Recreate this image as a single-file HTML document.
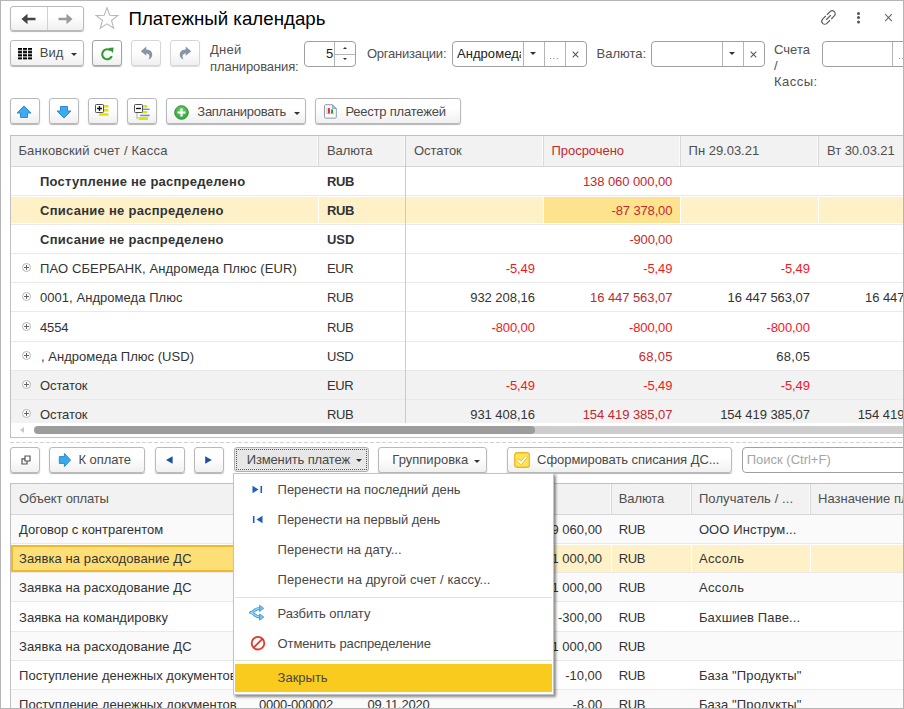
<!DOCTYPE html><html lang="ru"><head><meta charset="utf-8"><title>Платежный календарь</title><style>
*{box-sizing:border-box;margin:0;padding:0}
html,body{width:904px;height:709px;overflow:hidden;background:#fff}
body{position:relative;font-family:"Liberation Sans",sans-serif;font-size:13px;color:#333;line-height:16px}
.abs,.t,.btn svg,.btn i,.fld i,.fld svg{position:absolute}
.frame{position:absolute;left:0;top:0;width:904px;height:709px;border:1px solid #b5b5b5;z-index:50}
.btn{position:absolute;height:26px;border:1px solid #b9b9b9;border-radius:3px;background:linear-gradient(#fff,#fff 40%,#f0f0f0);box-shadow:0 1px 1px rgba(0,0,0,.3)}
.fld{position:absolute;height:26px;border:1px solid #a0a0a0;border-radius:4px;background:#fff;overflow:hidden}
.fld i{top:0;width:1px;height:24px;background:#b5b5b5}
.t{white-space:nowrap}
.caret{position:absolute;width:0;height:0;border-left:3px solid transparent;border-right:3px solid transparent;border-top:3px solid #333}
.vl{position:absolute;width:1px}
.hl{position:absolute;height:1px;background:#e9e9e9}
.b{font-weight:bold}
</style></head><body>
<div class="btn" style="left:10px;top:6px;width:74px;height:25px"><i style="left:36px;top:0;width:1px;height:23px;background:#d0d0d0"></i><svg style="left:10.3px;top:6px" width="16" height="12" viewBox="0 0 16 12"><path d="M0.5 6 L6.5 0.8 V4.7 H14.5 V7.3 H6.5 V11.2 Z" fill="#444"/></svg><svg style="left:46.2px;top:6px" width="16" height="12" viewBox="0 0 16 12"><path d="M15.5 6 L9.5 0.8 V4.7 H1.5 V7.3 H9.5 V11.2 Z" fill="#9b9b9b"/></svg></div>
<svg class="abs" style="left:94px;top:6px" width="26" height="24" viewBox="0 0 26 24"><path d="M13 1.8 L15.8 9.3 L23.8 9.6 L17.5 14.5 L19.7 22.2 L13 17.8 L6.3 22.2 L8.5 14.5 L2.2 9.6 L10.2 9.3 Z" fill="none" stroke="#b8b8b8" stroke-width="1.1" stroke-linejoin="miter"/></svg>
<div class="t" style="left:128.5px;top:7px;letter-spacing:0.03px;color:#000;font-size:18.67px;line-height:24px;">Платежный календарь</div>
<svg class="abs" style="left:818px;top:7px" width="21" height="21" viewBox="-10.5 -10.5 21 21"><g transform="rotate(-45) scale(1.07)" fill="none" stroke="#5e5e5e" stroke-width="1.1" stroke-linecap="round"><path d="M-1.2 -2.8 H-4.9 a2.8 2.8 0 0 0 0 5.6 H-1.2"/><path d="M1.2 -2.8 H4.9 a2.8 2.8 0 0 1 0 5.6 H1.2"/><path d="M-2.6 0 H2.6"/></g></svg>
<div class="abs" style="left:857px;top:12px;width:3px;height:3px;background:#555;border-radius:1.5px;box-shadow:0 4px 0 #555,0 8.5px 0 #555"></div>
<svg class="abs" style="left:884px;top:13px" width="9" height="9" viewBox="0 0 9 9"><path d="M1.2 1.2 L7.8 8.2 M7.8 1.2 L1.2 8.2" stroke="#666" stroke-width="1.1"/></svg>
<div class="btn" style="left:10px;top:40px;width:74px"><svg style="left:7px;top:7px" width="14" height="12" viewBox="0 0 14 12"><g fill="#a8a8a8"><rect x="0" y="0.2" width="4" height="11"/><rect x="5" y="0.2" width="4" height="11"/><rect x="10" y="0.2" width="4" height="11"/></g><g fill="#000"><rect x="0" y="0" width="4" height="1.7"/><rect x="5" y="0" width="4" height="1.7"/><rect x="10" y="0" width="4" height="1.7"/><rect x="0" y="3.2" width="4" height="1.7"/><rect x="5" y="3.2" width="4" height="1.7"/><rect x="10" y="3.2" width="4" height="1.7"/><rect x="0" y="6.4" width="4" height="1.7"/><rect x="5" y="6.4" width="4" height="1.7"/><rect x="10" y="6.4" width="4" height="1.7"/><rect x="0" y="9.6" width="4" height="1.7"/><rect x="5" y="9.6" width="4" height="1.7"/><rect x="10" y="9.6" width="4" height="1.7"/></g></svg><i class="caret" style="left:60px;top:12px"></i></div>
<div class="t" style="left:39.7px;top:45px;letter-spacing:0.03px;color:#494949;">Вид</div>
<div class="btn" style="left:92px;top:40px;width:30px;border-color:#a2a2a2"><svg style="left:7px;top:4.6px" width="15" height="16" viewBox="0 0 15 16"><path d="M11.8 10.2 A5 5 0 1 1 10.6 4.6" fill="none" stroke="#2e9d2e" stroke-width="2.1"/><path d="M8.2 2 L13.6 1.6 L13 7 Z" fill="#2e9d2e"/></svg></div>
<div class="btn" style="left:131px;top:40px;width:30px;border-color:#d6d6d6;box-shadow:0 1px 1px rgba(0,0,0,.15)"><svg style="left:8px;top:5px" width="14" height="14" viewBox="0 0 14 14"><path d="M0.8 5.2 L6.3 0.6 V3.5 C10.8 3.5 13 6.6 12 10.2 C11.5 11.9 10.3 12.9 8.4 13.3 C10 11.4 10 8 6.3 7.3 V9.8 Z" fill="#8796a6"/></svg></div>
<div class="btn" style="left:170px;top:40px;width:30px;border-color:#d6d6d6;box-shadow:0 1px 1px rgba(0,0,0,.15)"><svg style="left:7px;top:5px" width="14" height="14" viewBox="0 0 14 14"><path d="M13.2 5.2 L7.7 0.6 V3.5 C3.2 3.5 1 6.6 2 10.2 C2.5 11.9 3.7 12.9 5.6 13.3 C4 11.4 4 8 7.7 7.3 V9.8 Z" fill="#8796a6"/></svg></div>
<div class="t" style="left:210.1px;top:42px;letter-spacing:0.21px;color:#505050;">Дней</div>
<div class="t" style="left:210.1px;top:59px;letter-spacing:-0.1px;color:#505050;">планирования:</div>
<div class="fld" style="left:304px;top:41px;width:52px"><i style="left:29px"></i><i style="left:30px;top:12px;width:22px;height:1px"></i><i style="left:38px;top:5px;width:0;height:0;background:none;border-left:2px solid transparent;border-right:2px solid transparent;border-bottom:2.5px solid #333"></i><i style="left:38px;top:16px;width:0;height:0;background:none;border-left:2px solid transparent;border-right:2px solid transparent;border-top:2.5px solid #333"></i></div>
<div class="t" style="left:325.9px;top:46px;color:#222;">5</div>
<div class="t" style="left:366.9px;top:46px;letter-spacing:-0.24px;color:#505050;">Организации:</div>
<div class="fld" style="left:452px;top:41px;width:135px"><i style="left:70px"></i><i style="left:91px"></i><i style="left:112px"></i><i class="caret" style="left:77px;top:10px;background:none;height:0;width:0"></i><i style="left:97px;top:16px;width:1.4px;height:1.4px;background:#888;box-shadow:3.4px 0 0 #888,6.8px 0 0 #888"></i><svg style="left:119px;top:9px" width="7" height="7" viewBox="0 0 7 7"><path d="M0.7 0.7 L6.3 6.3 M6.3 0.7 L0.7 6.3" stroke="#555" stroke-width="1.05"/></svg></div>
<div class="t" style="left:457px;top:46px;letter-spacing:0.05px;color:#222;width:63.5px;overflow:hidden;">Андромеда</div>
<div class="t" style="left:596.5px;top:46px;color:#505050;">Валюта:</div>
<div class="fld" style="left:651px;top:41px;width:114px"><i style="left:70px"></i><i style="left:91px"></i><i class="caret" style="left:77px;top:10px;background:none;height:0;width:0"></i><svg style="left:98px;top:9px" width="7" height="7" viewBox="0 0 7 7"><path d="M0.7 0.7 L6.3 6.3 M6.3 0.7 L0.7 6.3" stroke="#555" stroke-width="1.05"/></svg></div>
<div class="t" style="left:774.1px;top:42px;letter-spacing:-0.01px;color:#505050;">Счета</div>
<div class="t" style="left:774.1px;top:58px;color:#505050;">/</div>
<div class="t" style="left:774.1px;top:74px;letter-spacing:0.45px;color:#505050;">Кассы:</div>
<div class="fld" style="left:822px;top:41px;width:100px"><i style="left:69px"></i><i style="left:76px;top:16px;width:1.4px;height:1.4px;background:#888;box-shadow:3.4px 0 0 #888,6.8px 0 0 #888"></i></div>
<div class="btn" style="left:10px;top:98px;width:30px"><svg style="left:5.4px;top:6px" width="16" height="14" viewBox="0 0 16 14"><path d="M8 1 L15 8 H11.5 V12.5 H4.5 V8 H1 Z" fill="#3dabee" stroke="#2b8cd8" stroke-width="1" stroke-linejoin="round"/></svg></div>
<div class="btn" style="left:49px;top:98px;width:30px"><svg style="left:5.6px;top:6px;transform:rotate(180deg)" width="16" height="14" viewBox="0 0 16 14"><path d="M8 1 L15 8 H11.5 V12.5 H4.5 V8 H1 Z" fill="#3dabee" stroke="#2b8cd8" stroke-width="1" stroke-linejoin="round"/></svg></div>
<div class="btn" style="left:88px;top:98px;width:30px"><svg style="left:5px;top:4px" width="17" height="15" viewBox="0 0 17 15"><g fill="#e4e400"><rect x="9" y="2" width="5.5" height="2.6"/><rect x="9" y="6" width="5.5" height="2.6"/><rect x="5" y="10.2" width="9.5" height="2.6"/></g><rect x="1.5" y="1.5" width="8" height="8" rx=".8" fill="#fff" stroke="#505050"/><path d="M3 5.5 H8 M5.5 3 V8" stroke="#111" stroke-width="1.3"/></svg></div>
<div class="btn" style="left:127px;top:98px;width:30px"><svg style="left:5px;top:4px" width="19" height="19" viewBox="0 0 19 19"><g fill="#e4e400"><rect x="9" y="2" width="5.3" height="2.6"/><rect x="9" y="8" width="5.3" height="2.2"/><rect x="5.5" y="14" width="9.5" height="3"/></g><g fill="#3aa0e8"><rect x="10" y="5.6" width="6.6" height="1.4"/><rect x="7.2" y="11.7" width="9.4" height="1.5"/></g><rect x="1.5" y="1.5" width="8" height="8" rx=".8" fill="#fff" stroke="#505050"/><path d="M3 5.5 H8" stroke="#111" stroke-width="1.3"/><path d="M4 10.5 V16" fill="none" stroke="#666" stroke-width="1" stroke-dasharray="1 1"/></svg></div>
<div class="btn" style="left:166px;top:98px;width:140px"><svg style="left:7px;top:6px" width="15" height="15" viewBox="0 0 15 15"><defs><radialGradient id="gp" cx=".5" cy=".35" r=".7"><stop offset="0" stop-color="#6fd06f"/><stop offset="1" stop-color="#2f9e35"/></radialGradient></defs><circle cx="7.5" cy="7.5" r="6.8" fill="url(#gp)" stroke="#2a962f"/><path d="M7.5 3.5 V11.5 M3.5 7.5 H11.5" stroke="#fff" stroke-width="2.2"/></svg><i class="caret" style="left:127px;top:13px"></i></div>
<div class="t" style="left:197.3px;top:104px;letter-spacing:-0.27px;color:#494949;">Запланировать</div>
<div class="btn" style="left:315px;top:98px;width:146px"><svg style="left:8px;top:5px" width="13" height="15" viewBox="0 0 13 15"><path d="M1.6 0.7 H8.4 L12.3 4.6 V13 a1.1 1.1 0 0 1 -1.1 1.1 H1.6 a1.1 1.1 0 0 1 -1.1 -1.1 V1.8 a1.1 1.1 0 0 1 1.1 -1.1 Z" fill="#fff" stroke="#8b9bad" stroke-width="1"/><path d="M8.4 0.9 V4.6 H12.1 Z" fill="#b9c5d1" stroke="#8b9bad" stroke-width=".8"/><path d="M2.8 3.6 V9.7 H10" fill="none" stroke="#9aa9ba" stroke-width=".6"/><rect x="3.9" y="4.1" width="2" height="5.3" fill="#f0252a"/><rect x="7.1" y="5.4" width="2" height="4" fill="#1f9a3a"/></svg></div>
<div class="t" style="left:345.4px;top:104px;letter-spacing:-0.21px;color:#494949;">Реестр платежей</div>
<div class="abs" style="left:10px;top:135px;width:900px;height:303px;border:1px solid #c0c0c0;background:#fff"></div>
<div class="abs" style="left:11px;top:136px;width:893px;height:31px;background:#f2f2f2;border-bottom:1px solid #d6d6d6"></div>
<div class="hl" style="left:11px;top:195px;width:893px"></div>
<div class="t b" style="left:40px;top:174px;letter-spacing:0.24px;">Поступление не распределено</div>
<div class="t b" style="left:327px;top:174px;letter-spacing:-0.44px;">RUB</div>
<div class="t" style="left:582.9px;top:174px;letter-spacing:-0.07px;color:#c5282f;">138 060 000,00</div>
<div class="abs" style="left:11px;top:197px;width:893px;height:26px;background:#fef1c8"></div>
<div class="abs" style="left:544px;top:197px;width:136px;height:26px;background:#fee38e"></div>
<div class="hl" style="left:11px;top:224px;width:893px"></div>
<div class="t b" style="left:40px;top:203px;letter-spacing:0.27px;">Списание не распределено</div>
<div class="t b" style="left:327px;top:203px;letter-spacing:-0.44px;">RUB</div>
<div class="t" style="left:611.6px;top:203px;letter-spacing:-0.15px;color:#c5282f;">-87 378,00</div>
<div class="hl" style="left:11px;top:253px;width:893px"></div>
<div class="t b" style="left:40px;top:232px;letter-spacing:0.27px;">Списание не распределено</div>
<div class="t b" style="left:327px;top:232px;letter-spacing:-0.08px;">USD</div>
<div class="t" style="left:629.4px;top:232px;letter-spacing:-0.18px;color:#c5282f;">-900,00</div>
<div class="hl" style="left:11px;top:282px;width:893px"></div>
<svg class="abs" style="left:22px;top:263px" width="9" height="9" viewBox="0 0 9 9"><circle cx="4.5" cy="4.5" r="4" fill="#fff" stroke="#b4b4b4" stroke-width="1"/><path d="M2 4.5 H7 M4.5 2 V7" stroke="#666" stroke-width="1"/></svg>
<div class="t" style="left:40px;top:261px;letter-spacing:0.12px;">ПАО СБЕРБАНК, Андромеда Плюс (EUR)</div>
<div class="t" style="left:327px;top:261px;letter-spacing:-0.43px;">EUR</div>
<div class="t" style="left:505.7px;top:261px;letter-spacing:-0.11px;color:#f5161d;">-5,49</div>
<div class="t" style="left:643.2px;top:261px;letter-spacing:-0.11px;color:#f5161d;">-5,49</div>
<div class="t" style="left:780.7px;top:261px;letter-spacing:-0.11px;color:#f5161d;">-5,49</div>
<div class="hl" style="left:11px;top:311px;width:893px"></div>
<svg class="abs" style="left:22px;top:292px" width="9" height="9" viewBox="0 0 9 9"><circle cx="4.5" cy="4.5" r="4" fill="#fff" stroke="#b4b4b4" stroke-width="1"/><path d="M2 4.5 H7 M4.5 2 V7" stroke="#666" stroke-width="1"/></svg>
<div class="t" style="left:40px;top:290px;letter-spacing:0.05px;">0001, Андромеда Плюс</div>
<div class="t" style="left:327px;top:290px;letter-spacing:-0.43px;">RUB</div>
<div class="t" style="left:470.2px;top:290px;letter-spacing:-0.04px;">932 208,16</div>
<div class="t" style="left:590px;top:290px;letter-spacing:-0.06px;color:#c5282f;">16 447 563,07</div>
<div class="t" style="left:727.5px;top:290px;letter-spacing:-0.06px;">16 447 563,07</div>
<div class="t" style="left:865px;top:290px;letter-spacing:-0.06px;">16 447 563,07</div>
<div class="hl" style="left:11px;top:341px;width:893px"></div>
<svg class="abs" style="left:22px;top:322px" width="9" height="9" viewBox="0 0 9 9"><circle cx="4.5" cy="4.5" r="4" fill="#fff" stroke="#b4b4b4" stroke-width="1"/><path d="M2 4.5 H7 M4.5 2 V7" stroke="#666" stroke-width="1"/></svg>
<div class="t" style="left:40px;top:320px;letter-spacing:-0.14px;">4554</div>
<div class="t" style="left:327px;top:320px;letter-spacing:-0.43px;">RUB</div>
<div class="t" style="left:491.5px;top:320px;letter-spacing:-0.12px;color:#f5161d;">-800,00</div>
<div class="t" style="left:629px;top:320px;letter-spacing:-0.12px;color:#f5161d;">-800,00</div>
<div class="t" style="left:766.5px;top:320px;letter-spacing:-0.12px;color:#f5161d;">-800,00</div>
<div class="hl" style="left:11px;top:370px;width:893px"></div>
<svg class="abs" style="left:22px;top:351px" width="9" height="9" viewBox="0 0 9 9"><circle cx="4.5" cy="4.5" r="4" fill="#fff" stroke="#b4b4b4" stroke-width="1"/><path d="M2 4.5 H7 M4.5 2 V7" stroke="#666" stroke-width="1"/></svg>
<div class="t" style="left:41px;top:349px;letter-spacing:0.03px;">, Андромеда Плюс (USD)</div>
<div class="t" style="left:327px;top:349px;letter-spacing:-0.43px;">USD</div>
<div class="t" style="left:638.8px;top:349px;letter-spacing:0.26px;color:#c5282f;">68,05</div>
<div class="t" style="left:776.3px;top:349px;letter-spacing:0.26px;">68,05</div>
<div class="abs" style="left:11px;top:371px;width:893px;height:28px;background:#f2f2f2"></div>
<div class="hl" style="left:11px;top:399px;width:893px"></div>
<svg class="abs" style="left:22px;top:380px" width="9" height="9" viewBox="0 0 9 9"><circle cx="4.5" cy="4.5" r="4" fill="#fff" stroke="#b4b4b4" stroke-width="1"/><path d="M2 4.5 H7 M4.5 2 V7" stroke="#666" stroke-width="1"/></svg>
<div class="t" style="left:40px;top:378px;letter-spacing:-0.1px;">Остаток</div>
<div class="t" style="left:327px;top:378px;letter-spacing:-0.43px;">EUR</div>
<div class="t" style="left:505.7px;top:378px;letter-spacing:-0.11px;color:#f5161d;">-5,49</div>
<div class="t" style="left:643.2px;top:378px;letter-spacing:-0.11px;color:#f5161d;">-5,49</div>
<div class="t" style="left:780.7px;top:378px;letter-spacing:-0.11px;color:#f5161d;">-5,49</div>
<div class="abs" style="left:11px;top:400px;width:893px;height:28px;background:#f2f2f2"></div>
<div class="hl" style="left:11px;top:428px;width:893px"></div>
<svg class="abs" style="left:22px;top:409px" width="9" height="9" viewBox="0 0 9 9"><circle cx="4.5" cy="4.5" r="4" fill="#fff" stroke="#b4b4b4" stroke-width="1"/><path d="M2 4.5 H7 M4.5 2 V7" stroke="#666" stroke-width="1"/></svg>
<div class="t" style="left:40px;top:407px;letter-spacing:-0.1px;">Остаток</div>
<div class="t" style="left:327px;top:407px;letter-spacing:-0.43px;">RUB</div>
<div class="t" style="left:470.2px;top:407px;letter-spacing:-0.04px;">931 408,16</div>
<div class="t" style="left:582.7px;top:407px;letter-spacing:-0.05px;color:#c5282f;">154 419 385,07</div>
<div class="t" style="left:720.2px;top:407px;letter-spacing:-0.05px;">154 419 385,07</div>
<div class="t" style="left:857.7px;top:407px;letter-spacing:-0.05px;">154 419 385,07</div>
<div class="t" style="left:18.4px;top:143px;letter-spacing:0.19px;color:#4f4f4f;">Банковский счет / Касса</div>
<div class="t" style="left:327px;top:143px;letter-spacing:-0.1px;color:#4f4f4f;">Валюта</div>
<div class="t" style="left:414px;top:143px;letter-spacing:-0.05px;color:#4f4f4f;">Остаток</div>
<div class="t" style="left:551.5px;top:143px;letter-spacing:-0.04px;color:#c5282f;">Просрочено</div>
<div class="t" style="left:688.6px;top:143px;letter-spacing:-0.02px;color:#4f4f4f;">Пн 29.03.21</div>
<div class="t" style="left:827.1px;top:143px;letter-spacing:-0.08px;color:#4f4f4f;">Вт 30.03.21</div>
<div class="vl" style="left:317px;top:136px;height:30px;background:#fcfcfc"></div>
<div class="vl" style="left:318px;top:136px;height:30px;background:#d8d8d8"></div>
<div class="vl" style="left:542px;top:136px;height:30px;background:#fcfcfc"></div>
<div class="vl" style="left:543px;top:136px;height:30px;background:#d8d8d8"></div>
<div class="vl" style="left:679px;top:136px;height:30px;background:#fcfcfc"></div>
<div class="vl" style="left:680px;top:136px;height:30px;background:#d8d8d8"></div>
<div class="vl" style="left:817px;top:136px;height:30px;background:#fcfcfc"></div>
<div class="vl" style="left:818px;top:136px;height:30px;background:#d8d8d8"></div>
<div class="vl" style="left:404px;top:136px;height:30px;background:#fcfcfc"></div>
<div class="vl" style="left:405px;top:136px;height:288px;background:#cbcbcb"></div>
<div class="vl" style="left:318px;top:196px;height:28px;background:#fff"></div>
<div class="vl" style="left:543px;top:196px;height:28px;background:#fff"></div>
<div class="vl" style="left:680px;top:196px;height:28px;background:#fff"></div>
<div class="vl" style="left:818px;top:196px;height:28px;background:#fff"></div>
<div class="abs" style="left:11px;top:423px;width:893px;height:13px;background:#fff"></div>
<div class="abs" style="left:36px;top:426px;width:880px;height:8px;border-radius:4px 0 0 4px;background:#cdcdcd"></div>
<div class="abs" style="left:34px;top:426px;width:501px;height:8px;border-radius:4px;background:#9c9c9c"></div>
<div class="abs" style="left:20px;top:427px;width:0;height:0;border-top:3px solid transparent;border-bottom:3px solid transparent;border-right:4px solid #c8c8c8"></div>
<div class="abs" style="left:10px;top:442px;width:894px;height:1px;background:repeating-linear-gradient(90deg,#d2d2d2 0,#d2d2d2 4px,transparent 4px,transparent 6px)"></div>
<div class="btn" style="left:10px;top:447px;width:30px"><svg style="left:10px;top:7px" width="10" height="10" viewBox="0 0 10 10"><path d="M4 1 H9 V6 H4 Z M4 3.8 H1 V9 H6 V6" fill="none" stroke="#555" stroke-width="1.2"/></svg></div>
<div class="btn" style="left:49px;top:447px;width:96px"><svg style="left:8px;top:4px" width="14" height="16" viewBox="0 0 14 16"><path d="M12.6 8 L6.4 1.4 V4.6 H1.3 V11.4 H6.4 V14.6 Z" fill="#3ba7ea" stroke="#2a8fd6" stroke-width="1" stroke-linejoin="round"/></svg></div>
<div class="t" style="left:78.5px;top:452px;letter-spacing:-0.08px;color:#494949;">К оплате</div>
<div class="btn" style="left:155px;top:447px;width:30px"><svg style="left:10.4px;top:7.6px" width="7" height="8" viewBox="0 0 7 8"><path d="M0 4 L6.6 0.2 V7.8 Z" fill="#1b50aa"/></svg></div>
<div class="btn" style="left:194px;top:447px;width:30px"><svg style="left:10.4px;top:7.6px" width="7" height="8" viewBox="0 0 7 8"><path d="M6.8 4 L0.2 0.2 V7.8 Z" fill="#1b50aa"/></svg></div>
<div class="btn" style="left:234px;top:447px;width:135px;height:25px;background:#e7e7e7;border-color:#b0b0b0;box-shadow:none"><i style="left:1px;top:1px;right:1px;bottom:1px;border:1px dotted #555"></i><i class="caret" style="left:121px;top:11px"></i></div>
<div class="t" style="left:246.7px;top:452px;letter-spacing:-0.14px;color:#484848;">Изменить платеж</div>
<div class="btn" style="left:378px;top:447px;width:109px"><i class="caret" style="left:95px;top:12px"></i></div>
<div class="t" style="left:392.3px;top:452px;letter-spacing:0.02px;color:#494949;">Группировка</div>
<div class="btn" style="left:507px;top:447px;width:225px"><svg style="left:6px;top:4px" width="16" height="16" viewBox="0 0 16 16"><rect x="0.75" y="0.75" width="14.5" height="14.5" rx="2" fill="#fde84a" stroke="#f0b232" stroke-width="1.3"/><path d="M4 8.2 L7 11 L12 5.2" fill="none" stroke="#e8a33a" stroke-width="3" stroke-linecap="round" stroke-linejoin="round"/><path d="M4 8.2 L7 11 L12 5.2" fill="none" stroke="#fff" stroke-width="1.9" stroke-linecap="round" stroke-linejoin="round"/></svg></div>
<div class="t" style="left:537.1px;top:452px;letter-spacing:-0.06px;color:#494949;">Сформировать списания ДС...</div>
<div class="fld" style="left:742px;top:447px;width:180px;border-radius:4px"></div>
<div class="t" style="left:746.7px;top:452px;color:#a5a5a5;">Поиск (Ctrl+F)</div>
<div class="abs" style="left:10px;top:483px;width:900px;height:240px;border:1px solid #c0c0c0;background:#fff"></div>
<div class="abs" style="left:11px;top:484px;width:893px;height:31px;background:#f2f2f2;border-bottom:1px solid #d6d6d6"></div>
<div class="t" style="left:19.1px;top:491px;letter-spacing:-0.19px;color:#4f4f4f;">Объект оплаты</div>
<div class="t" style="left:618.8px;top:491px;letter-spacing:-0.12px;color:#4f4f4f;">Валюта</div>
<div class="t" style="left:698.9px;top:491px;letter-spacing:0.1px;color:#4f4f4f;">Получатель / ...</div>
<div class="t" style="left:818.1px;top:491px;color:#4f4f4f;">Назначение платежа</div>
<div class="vl" style="left:610px;top:484px;height:30px;background:#fcfcfc"></div>
<div class="vl" style="left:611px;top:484px;height:30px;background:#d8d8d8"></div>
<div class="vl" style="left:690px;top:484px;height:30px;background:#fcfcfc"></div>
<div class="vl" style="left:691px;top:484px;height:30px;background:#d8d8d8"></div>
<div class="vl" style="left:809px;top:484px;height:30px;background:#fcfcfc"></div>
<div class="vl" style="left:810px;top:484px;height:30px;background:#d8d8d8"></div>
<div class="abs" style="left:11px;top:515px;width:893px;height:28px;background:#fafafa"></div>
<div class="hl" style="left:11px;top:543px;width:893px"></div>
<div class="t" style="left:19.1px;top:522px;letter-spacing:-0.01px;">Договор с контрагентом</div>
<div class="t" style="left:551.5px;top:522px;">9 060,00</div>
<div class="t" style="left:618.8px;top:522px;letter-spacing:-0.43px;">RUB</div>
<div class="t" style="left:698.9px;top:522px;letter-spacing:0.11px;">ООО Инструм...</div>
<div class="abs" style="left:11px;top:545px;width:893px;height:27px;background:#fef1c8"></div>
<div class="abs" style="left:11px;top:545px;width:232px;height:27px;background:#fddf78;border:2px solid #f2b926;border-right:0"></div>
<div class="vl" style="left:611px;top:544px;height:28px;background:#fff"></div>
<div class="vl" style="left:691px;top:544px;height:28px;background:#fff"></div>
<div class="vl" style="left:810px;top:544px;height:28px;background:#fff"></div>
<div class="hl" style="left:11px;top:572px;width:893px"></div>
<div class="t" style="left:19.1px;top:551px;letter-spacing:0.09px;">Заявка на расходование ДС</div>
<div class="t" style="left:551.5px;top:551px;">1 000,00</div>
<div class="t" style="left:618.8px;top:551px;letter-spacing:-0.43px;">RUB</div>
<div class="t" style="left:698.9px;top:551px;letter-spacing:0.38px;">Ассоль</div>
<div class="abs" style="left:11px;top:573px;width:893px;height:28px;background:#fafafa"></div>
<div class="hl" style="left:11px;top:601px;width:893px"></div>
<div class="t" style="left:19.1px;top:580px;letter-spacing:0.09px;">Заявка на расходование ДС</div>
<div class="t" style="left:551.5px;top:580px;">1 000,00</div>
<div class="t" style="left:618.8px;top:580px;letter-spacing:-0.43px;">RUB</div>
<div class="t" style="left:698.9px;top:580px;letter-spacing:0.38px;">Ассоль</div>
<div class="hl" style="left:11px;top:631px;width:893px"></div>
<div class="t" style="left:19.1px;top:610px;">Заявка на командировку</div>
<div class="t" style="left:558px;top:610px;">-300,00</div>
<div class="t" style="left:618.8px;top:610px;letter-spacing:-0.43px;">RUB</div>
<div class="t" style="left:698.9px;top:610px;letter-spacing:0.16px;">Бахшиев Паве...</div>
<div class="abs" style="left:11px;top:632px;width:893px;height:28px;background:#fafafa"></div>
<div class="hl" style="left:11px;top:660px;width:893px"></div>
<div class="t" style="left:19.1px;top:639px;letter-spacing:0.09px;">Заявка на расходование ДС</div>
<div class="t" style="left:551.5px;top:639px;">1 000,00</div>
<div class="t" style="left:618.8px;top:639px;letter-spacing:-0.43px;">RUB</div>
<div class="hl" style="left:11px;top:689px;width:893px"></div>
<div class="t" style="left:19.1px;top:668px;">Поступление денежных документов</div>
<div class="t" style="left:565.2px;top:668px;">-10,00</div>
<div class="t" style="left:618.8px;top:668px;letter-spacing:-0.43px;">RUB</div>
<div class="t" style="left:698.9px;top:668px;letter-spacing:0.15px;">База "Продукты"</div>
<div class="abs" style="left:11px;top:690px;width:893px;height:28px;background:#fafafa"></div>
<div class="hl" style="left:11px;top:718px;width:893px"></div>
<div class="t" style="left:19.1px;top:697px;">Поступление денежных документов</div>
<div class="t" style="left:259px;top:697px;letter-spacing:-0.23px;">0000-000002</div>
<div class="t" style="left:367.5px;top:697px;letter-spacing:-0.2px;">09.11.2020</div>
<div class="t" style="left:572.5px;top:697px;">-8,00</div>
<div class="t" style="left:618.8px;top:697px;letter-spacing:-0.43px;">RUB</div>
<div class="t" style="left:698.9px;top:697px;letter-spacing:0.15px;">База "Продукты"</div>
<div class="abs" style="left:233px;top:473px;width:321px;height:222px;background:#fff;border:1px solid #c4c4c4;box-shadow:2px 2px 2.5px rgba(0,0,0,.45)"></div>
<div class="abs" style="left:235px;top:664px;width:317px;height:28px;background:#f9cb1f"></div>
<div class="t" style="left:277.6px;top:482px;letter-spacing:-0.03px;color:#474747;">Перенести на последний день</div>
<div class="t" style="left:277.6px;top:512px;letter-spacing:-0.06px;color:#474747;">Перенести на первый день</div>
<div class="t" style="left:277.6px;top:542px;letter-spacing:0.03px;color:#474747;">Перенести на дату...</div>
<div class="t" style="left:277.6px;top:572px;letter-spacing:0.1px;color:#474747;">Перенести на другой счет / кассу...</div>
<div class="t" style="left:277.6px;top:606px;letter-spacing:-0.06px;color:#474747;">Разбить оплату</div>
<div class="t" style="left:277.6px;top:636px;letter-spacing:-0.13px;color:#474747;">Отменить распределение</div>
<div class="t" style="left:277.6px;top:670px;letter-spacing:-0.01px;color:#474747;">Закрыть</div>
<div class="abs" style="left:235px;top:597px;width:317px;height:1px;background:#e4e0d2"></div>
<div class="abs" style="left:235px;top:660px;width:317px;height:1px;background:#e4e0d2"></div>
<svg class="abs" style="left:252px;top:484.5px" width="11" height="9" viewBox="0 0 11 9"><path d="M0.5 0.8 L6.5 4.5 L0.5 8.2 Z" fill="#1d5fc0"/><rect x="8.5" y="1" width="1.6" height="7" fill="#1d5fc0"/></svg>
<svg class="abs" style="left:252px;top:514.5px" width="11" height="9" viewBox="0 0 11 9"><path d="M10.5 0.8 L4.5 4.5 L10.5 8.2 Z" fill="#1d5fc0"/><rect x="0.9" y="1" width="1.6" height="7" fill="#1d5fc0"/></svg>
<svg class="abs" style="left:249px;top:604px" width="16" height="17" viewBox="0 0 16 17"><g fill="none" stroke-linecap="round"><path d="M1.6 8.6 C5 8.6 5.5 4.4 11 4.4 M1.6 8.6 C5 8.6 5.5 13 11 13" stroke="#3d9cdb" stroke-width="3"/><path d="M1.6 8.6 C5 8.6 5.5 4.4 11 4.4 M1.6 8.6 C5 8.6 5.5 13 11 13" stroke="#a6d8f5" stroke-width="1.2"/></g><path d="M10.6 1.2 L14.8 4.4 L10.6 7.4 Z M10.6 10 L14.8 13 L10.6 16.2 Z" fill="#7cc3ee" stroke="#3d9cdb" stroke-width=".9" stroke-linejoin="round"/></svg>
<svg class="abs" style="left:250px;top:635px" width="16" height="16" viewBox="0 0 16 16"><circle cx="8" cy="8.2" r="6.3" fill="none" stroke="#e03b2b" stroke-width="1.8"/><path d="M3.6 12.6 L12.4 3.8" stroke="#e03b2b" stroke-width="1.8"/></svg>
<div class="frame"></div>
</body></html>
